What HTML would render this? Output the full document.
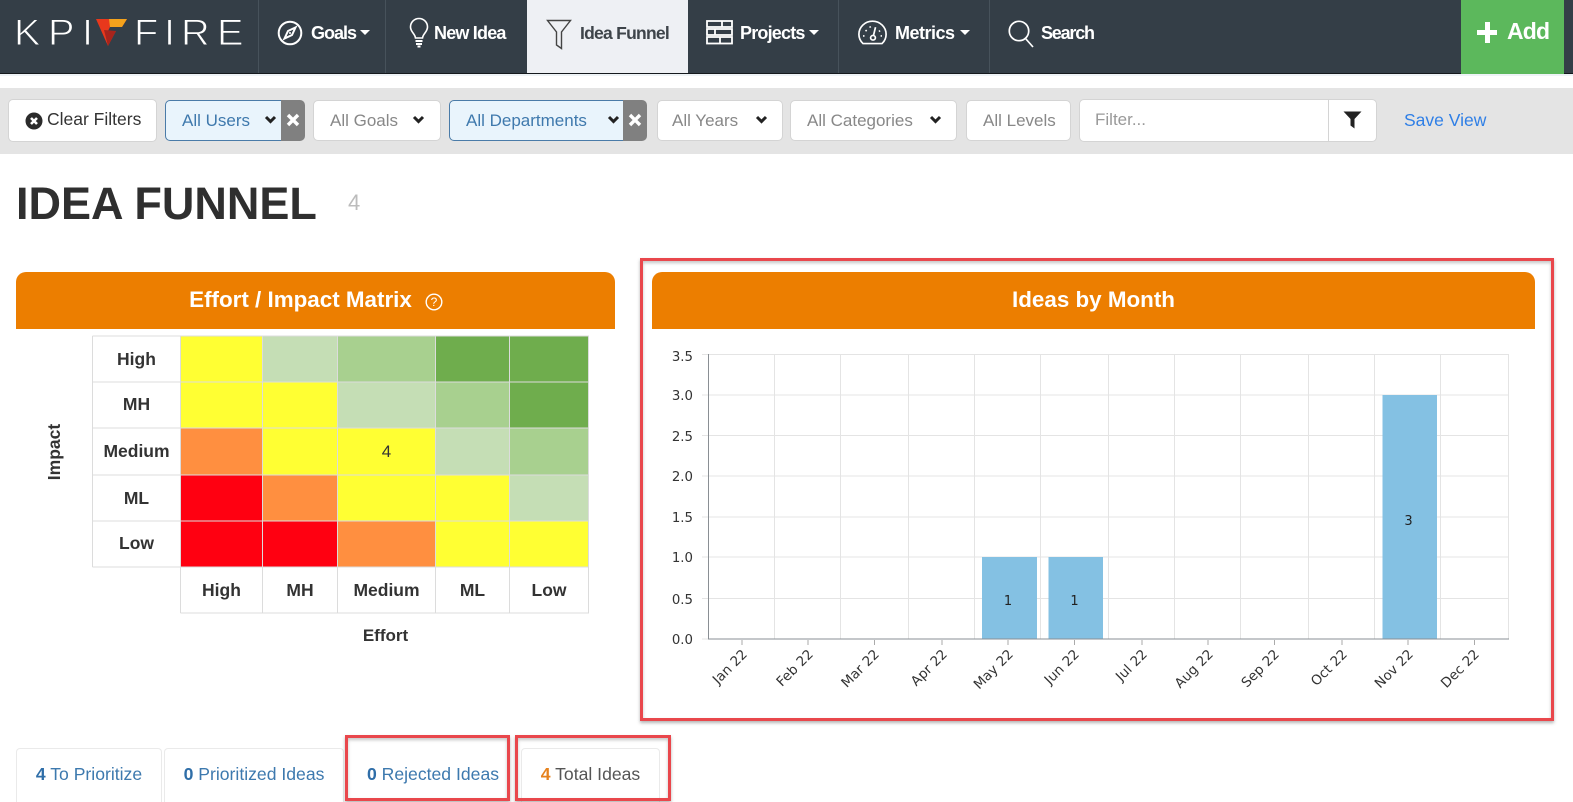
<!DOCTYPE html>
<html><head><meta charset="utf-8"><style>
html,body{margin:0;padding:0;background:#fff}
body{width:1573px;height:802px;overflow:hidden;position:relative;font-family:"Liberation Sans",sans-serif;color:#333}
.a{position:absolute;box-sizing:border-box;white-space:nowrap}
.nav{left:0;top:0;width:1573px;height:74px;background:#343e47;border-bottom:1px solid #15191d}
.dv{top:0;width:1px;height:73px;background:#47525b}
.nt{top:22px;height:22px;line-height:22px;font-size:18px;font-weight:bold;color:#fff;letter-spacing:-.8px}
.car{width:0;height:0;border-left:5px solid transparent;border-right:5px solid transparent;border-top:5px solid #fff;top:30px}
.lg{top:12px;font-size:37.5px;line-height:40px;color:#fff;-webkit-text-stroke:1px #343e47;transform:scaleX(1.06);transform-origin:left center}
.btn{top:100px;height:41px;background:#fff;border:1px solid #d4d4d4;border-radius:5px;font-size:17px;line-height:40px;color:#888}
.sel{background:#e9f4fc;border:1px solid #4a7ba8;color:#3f79ad}
.x{top:100px;width:24px;height:41px;background:#808080;border-radius:0 5px 5px 0}
.hd{background:#ec7e00;color:#fff;font-weight:bold;font-size:22.4px;text-align:center;border-radius:10px 10px 0 0;height:57px;top:272px;line-height:56px}
.c{display:flex;align-items:center;justify-content:center;font-size:17.5px;font-weight:bold;color:#333}
.tab{top:748px;height:54px;border:1px solid #eaeaea;border-bottom:none;border-radius:4px 4px 0 0;font-size:17.6px;padding-top:1px;color:#3d79ae;text-align:center;line-height:48px}
.tab b{color:#2f6ea8}
.rb{border:3px solid #e9474c;box-shadow:0 2px 3px rgba(90,90,90,.45), inset 0 2px 3px rgba(90,90,90,.35)}
svg{position:absolute;overflow:visible}
</style></head><body>
<div class="a nav"></div>
<div class="a" style="left:0;top:74px;width:1573px;height:2px;background:#eef3f6"></div>
<div class="a lg" style="left:14px">K</div>
<div class="a lg" style="left:48px">P</div>
<div class="a lg" style="left:82px">I</div>
<div class="a lg" style="left:134px">F</div>
<div class="a lg" style="left:164px">I</div>
<div class="a lg" style="left:181px">R</div>
<div class="a lg" style="left:217px">E</div>
<svg class="a" style="left:96px;top:18px" width="32" height="30" viewBox="0 0 32 30"><polygon points="0,1 31,1 26,9 14,9 12,13 20,13 12,28" fill="#e8381c"/><polygon points="13,1 31,1 26,9 14,9" fill="#f4a21c"/><polygon points="8,12 20,13 12,28" fill="#a8241c"/></svg>
<div class="a dv" style="left:258px"></div>
<div class="a dv" style="left:385px"></div>
<div class="a" style="left:527px;top:0;width:161px;height:73px;background:#eef0f4"></div>
<div class="a dv" style="left:838px"></div>
<div class="a dv" style="left:989px"></div>
<svg class="a" style="left:277px;top:20px" width="26" height="26" viewBox="0 0 26 26" fill="none" stroke="#fff" stroke-width="2"><circle cx="13" cy="13" r="11.3"/><path d="M18.5 7.5L15 15 7.5 18.5 11 11Z"/><circle cx="13" cy="13" r="1" fill="#fff" stroke="none"/></svg>
<div class="a nt" style="left:311px;letter-spacing:-1px">Goals</div><div class="a car" style="left:360px"></div>
<svg class="a" style="left:409px;top:18px" width="20" height="30" viewBox="0 0 20 30" fill="none" stroke="#fff" stroke-width="1.6"><path d="M6.5 20C6 15.5 1.5 14 1.5 9A8.4 8.4 0 0 1 18.5 9C18.5 14 14 15.5 13.5 20Z"/><path d="M6.5 23H13.5M7 26H13M8.5 28.5H11.5" stroke-width="2"/></svg>
<div class="a nt" style="left:434px">New Idea</div>
<svg class="a" style="left:546px;top:19px" width="26" height="32" viewBox="0 0 26 32" fill="none" stroke="#444" stroke-width="1.4"><path d="M1.5 1.5H24.5L15.5 13V29.5L10.5 26V13Z"/></svg>
<div class="a nt" style="left:580px;color:#3e444a;font-size:17.5px;letter-spacing:-.75px">Idea Funnel</div>
<svg class="a" style="left:706px;top:20px" width="27" height="25" viewBox="0 0 27 25" fill="none" stroke="#fff" stroke-width="1.8"><rect x="1" y="1" width="25" height="6"/><rect x="1" y="9" width="25" height="6"/><rect x="1" y="17" width="25" height="6.5"/><path d="M16 1V7M9 9V15M14 17V23.5"/></svg>
<div class="a nt" style="left:740px">Projects</div><div class="a car" style="left:809px"></div>
<svg class="a" style="left:858px;top:21px" width="29" height="24" viewBox="0 0 29 25" preserveAspectRatio="none" fill="none" stroke="#fff" stroke-width="1.7"><path d="M5 23.5H24A13.6 13.6 0 1 0 5 23.5Z"/><circle cx="15" cy="17.5" r="2.4"/><path d="M15.5 15L17.5 6.5"/><path d="M5 15.5H6.5M7.5 9.5L8.7 10.5M12 5.5L12.4 7M22 10L21 11M24 15.5H22.6"/></svg>
<div class="a nt" style="left:895px;letter-spacing:-.5px">Metrics</div><div class="a car" style="left:960px"></div>
<svg class="a" style="left:1008px;top:20px" width="27" height="29" viewBox="0 0 27 29" fill="none" stroke="#fff" stroke-width="1.7"><circle cx="11" cy="11" r="9.7"/><path d="M17.5 18.5L25 27"/></svg>
<div class="a nt" style="left:1041px;letter-spacing:-1.2px">Search</div>
<div class="a" style="left:1461px;top:0;width:103px;height:74px;background:#5cb85c"></div>
<div class="a" style="left:1477px;top:30px;width:20px;height:5px;background:#fff"></div>
<div class="a" style="left:1484.5px;top:22px;width:5px;height:21px;background:#fff"></div>
<div class="a" style="left:1507px;top:16px;font-size:23px;line-height:30px;font-weight:bold;color:#fff;letter-spacing:-.8px">Add</div>

<div class="a" style="left:0;top:88px;width:1573px;height:66px;background:#e4e4e4"></div>
<div class="a btn" style="left:8px;top:99px;width:149px;height:43px;color:#333;font-size:17.5px;line-height:39px;padding-left:38px">Clear Filters</div>
<svg class="a" style="left:25px;top:112px" width="18" height="18" viewBox="0 0 18 18"><circle cx="9" cy="9" r="8.5" fill="#2b2b2b"/><path d="M6 6L12 12M12 6L6 12" stroke="#fff" stroke-width="2.6"/></svg>
<div class="a btn sel" style="left:165px;width:130px;padding-left:16px">All Users</div>
<div class="a x" style="left:281px"></div>
<svg class="a" style="left:286px;top:113px" width="14" height="14" viewBox="0 0 14 14"><path d="M2 2L12 12M12 2L2 12" stroke="#fff" stroke-width="3.4"/></svg>
<div class="a btn" style="left:313px;width:128px;padding-left:16px">All Goals</div>
<div class="a btn sel" style="left:449px;width:185px;padding-left:16px">All Departments</div>
<div class="a x" style="left:623px"></div>
<svg class="a" style="left:628px;top:113px" width="14" height="14" viewBox="0 0 14 14"><path d="M2 2L12 12M12 2L2 12" stroke="#fff" stroke-width="3.4"/></svg>
<div class="a btn" style="left:657px;width:126px;padding-left:14px">All Years</div>
<div class="a btn" style="left:790px;width:167px;padding-left:16px">All Categories</div>
<div class="a btn" style="left:966px;width:105px;padding-left:16px">All Levels</div>
<svg class="a" style="left:264px;top:115px" width="13" height="9" viewBox="0 0 13 9"><path d="M2 2L6.5 6.5 11 2" fill="none" stroke="#222" stroke-width="3"/></svg>
<svg class="a" style="left:412px;top:115px" width="13" height="9" viewBox="0 0 13 9"><path d="M2 2L6.5 6.5 11 2" fill="none" stroke="#222" stroke-width="3"/></svg>
<svg class="a" style="left:607px;top:115px" width="13" height="9" viewBox="0 0 13 9"><path d="M2 2L6.5 6.5 11 2" fill="none" stroke="#222" stroke-width="3"/></svg>
<svg class="a" style="left:755px;top:115px" width="13" height="9" viewBox="0 0 13 9"><path d="M2 2L6.5 6.5 11 2" fill="none" stroke="#222" stroke-width="3"/></svg>
<svg class="a" style="left:929px;top:115px" width="13" height="9" viewBox="0 0 13 9"><path d="M2 2L6.5 6.5 11 2" fill="none" stroke="#222" stroke-width="3"/></svg>
<div class="a btn" style="left:1079px;top:99px;width:298px;height:43px;color:#999;line-height:40px;padding-left:15px">Filter...</div>
<div class="a" style="left:1328px;top:99px;width:1px;height:43px;background:#d4d4d4"></div>
<svg class="a" style="left:1343px;top:111px" width="19" height="18" viewBox="0 0 19 18"><path d="M0.5 0.5H18.5L11.5 8V17.5L7.5 14.5V8Z" fill="#222"/></svg>
<div class="a" style="left:1404px;top:108px;font-size:17.5px;line-height:24px;color:#2f7fe6">Save View</div>

<div class="a" style="left:16px;top:176px;font-size:45px;line-height:56px;font-weight:bold;color:#2f2f2f">IDEA FUNNEL</div>
<div class="a" style="left:348px;top:190px;font-size:22px;line-height:26px;color:#bcbcbc">4</div>

<div class="a hd" style="left:16px;width:599px">Effort / Impact Matrix<span style="display:inline-block;width:30px"></span></div>
<svg class="a" style="left:425px;top:293px" width="18" height="18" viewBox="0 0 18 18" fill="none" stroke="#fff" stroke-width="1.4"><circle cx="9" cy="9" r="7.8"/><text x="9" y="13.2" text-anchor="middle" font-family="Liberation Sans" font-size="12" fill="#fff" stroke="none">?</text></svg>
<div class="a hd" style="left:652px;width:883px">Ideas by Month</div>

<svg class="a" style="left:0;top:0" width="1573" height="802" shape-rendering="crispEdges">
<g fill="#ffff33">
<rect x="180.5" y="336" width="82" height="46"/><rect x="180.5" y="382" width="82" height="46"/><rect x="263" y="382" width="74.5" height="46"/>
<rect x="263" y="428" width="74.5" height="47"/><rect x="337.5" y="428" width="98" height="47"/>
<rect x="337.5" y="475" width="98" height="46"/><rect x="435.5" y="475" width="74" height="46"/>
<rect x="435.5" y="521" width="74" height="46"/><rect x="509.5" y="521" width="79" height="46"/></g>
<g fill="#c5deb5"><rect x="263" y="336" width="74.5" height="46"/><rect x="337.5" y="382" width="98" height="46"/><rect x="435.5" y="428" width="74" height="47"/><rect x="509.5" y="475" width="79" height="46"/></g>
<g fill="#a8d08f"><rect x="337.5" y="336" width="98" height="46"/><rect x="435.5" y="382" width="74" height="46"/><rect x="509.5" y="428" width="79" height="47"/></g>
<g fill="#6fad4d"><rect x="435.5" y="336" width="74" height="46"/><rect x="509.5" y="336" width="79" height="46"/><rect x="509.5" y="382" width="79" height="46"/></g>
<g fill="#ff8f40"><rect x="180.5" y="428" width="82" height="47"/><rect x="263" y="475" width="74.5" height="46"/><rect x="337.5" y="521" width="98" height="46"/></g>
<g fill="#ff0011"><rect x="180.5" y="475" width="82" height="46"/><rect x="180.5" y="521" width="82" height="46"/><rect x="263" y="521" width="74.5" height="46"/></g>
<g stroke="#dcdcdc" stroke-width="1" fill="none">
<path d="M92.5 336H589M92.5 382H589M92.5 428H589M92.5 475H589M92.5 521H589M92.5 567H589M180.5 613H589"/>
<path d="M92.5 336V567M180.5 336V613M262.5 336V613M337.5 336V613M435.5 336V613M509.5 336V613M588.5 336V613"/>
</g>
</svg>
<div class="a c" style="left:93px;top:336px;width:87px;height:46px">High</div>
<div class="a c" style="left:93px;top:381px;width:87px;height:46px">MH</div>
<div class="a c" style="left:93px;top:428px;width:87px;height:47px">Medium</div>
<div class="a c" style="left:93px;top:475px;width:87px;height:46px">ML</div>
<div class="a c" style="left:93px;top:520px;width:87px;height:46px">Low</div>
<div class="a c" style="left:181px;top:567px;width:81px;height:46px">High</div>
<div class="a c" style="left:263px;top:567px;width:74px;height:46px">MH</div>
<div class="a c" style="left:338px;top:567px;width:97px;height:46px">Medium</div>
<div class="a c" style="left:436px;top:567px;width:73px;height:46px">ML</div>
<div class="a c" style="left:510px;top:567px;width:78px;height:46px">Low</div>
<div class="a c" style="left:338px;top:428px;width:97px;height:47px;font-weight:normal;font-size:17px">4</div>
<div class="a c" style="left:337px;top:625px;width:97px;height:22px;font-size:17px">Effort</div>
<div class="a c" style="left:14px;top:441px;width:80px;height:22px;font-size:17.5px;transform:rotate(-90deg)">Impact</div>

<svg class="a" style="left:0;top:0" width="1573" height="802">
<g stroke="#e4e4e4" stroke-width="1" shape-rendering="crispEdges">
<path d="M702 354.5H1509M702 395H1509M702 435.5H1509M702 476H1509M702 517H1509M702 557H1509M702 598.5H1509M702 639H709"/>
<path d="M774.5 355V639M840.5 355V639M908.5 355V639M974.5 355V639M1040.5 355V639M1108.5 355V639M1174.5 355V639M1240.5 355V639M1308.5 355V639M1374.5 355V639M1440.5 355V639M1508.5 355V639"/>
</g>
<g fill="#84c1e3"><rect x="982" y="557" width="55" height="82"/><rect x="1048.5" y="557" width="54.5" height="82"/><rect x="1382.5" y="395" width="54.5" height="244"/></g>
<path d="M708.5 354V639H1509" fill="none" stroke="#8a8f94" stroke-width="1.2" shape-rendering="crispEdges"/>
<path d="M742 640V645M808 640V645M874.5 640V645M942 640V645M1008 640V645M1074.5 640V645M1142 640V645M1208 640V645M1274.5 640V645M1342 640V645M1408 640V645M1474.5 640V645" stroke="#aaa" stroke-width="1" shape-rendering="crispEdges"/>
<g font-family="DejaVu Sans" font-size="13.3" fill="#333" text-anchor="end">
<text x="693" y="361">3.5</text><text x="693" y="400">3.0</text><text x="693" y="441">2.5</text><text x="693" y="481">2.0</text><text x="693" y="522">1.5</text><text x="693" y="562">1.0</text><text x="693" y="604">0.5</text><text x="693" y="644">0.0</text>
</g>
<g font-family="DejaVu Sans" font-size="13.5" fill="#333" text-anchor="end">
<text transform="translate(748,655) rotate(-45)">Jan 22</text>
<text transform="translate(814,655) rotate(-45)">Feb 22</text>
<text transform="translate(880,655) rotate(-45)">Mar 22</text>
<text transform="translate(948,655) rotate(-45)">Apr 22</text>
<text transform="translate(1014,655) rotate(-45)">May 22</text>
<text transform="translate(1080,655) rotate(-45)">Jun 22</text>
<text transform="translate(1148,655) rotate(-45)">Jul 22</text>
<text transform="translate(1214,655) rotate(-45)">Aug 22</text>
<text transform="translate(1280,655) rotate(-45)">Sep 22</text>
<text transform="translate(1348,655) rotate(-45)">Oct 22</text>
<text transform="translate(1414,655) rotate(-45)">Nov 22</text>
<text transform="translate(1480,655) rotate(-45)">Dec 22</text>
</g>
<g font-family="DejaVu Sans" font-size="13" fill="#222" text-anchor="middle">
<text x="1008" y="605">1</text><text x="1074.5" y="605">1</text><text x="1408.5" y="525">3</text>
</g>
</svg>

<div class="a rb" style="left:640px;top:258px;width:914px;height:463px;background:none"></div>

<div class="a tab" style="left:16px;width:146px"><b>4</b> To Prioritize</div>
<div class="a tab" style="left:164px;width:180px"><b>0</b> Prioritized Ideas</div>
<div class="a tab" style="left:353px;width:160px;border:none;padding-top:2px"><b>0</b> Rejected Ideas</div>
<div class="a tab" style="left:521px;width:139px;color:#555"><b style="color:#e6821e">4</b> Total Ideas</div>
<div class="a rb" style="left:345px;top:735px;width:165px;height:66px"></div>
<div class="a rb" style="left:515px;top:735px;width:156px;height:66px"></div>
</body></html>
